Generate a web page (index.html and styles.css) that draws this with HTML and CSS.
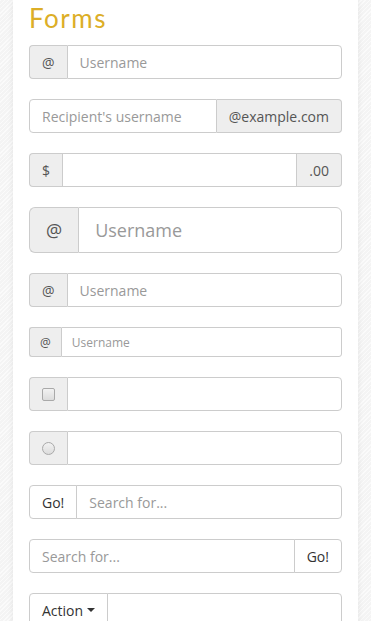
FILE: index.html
```html
<!DOCTYPE html>
<html lang="en">
<head>
  <meta charset="UTF-8">
  <meta name="viewport" content="width=device-width, initial-scale=1.0">
  <title>Forms</title>
  <link rel="stylesheet" href="styles.css">
</head>
<body>
  <div class="card">
    <h2>Forms</h2>

    <div class="input-group">
      <span class="addon">@</span>
      <input type="text" class="field" placeholder="Username">
    </div>

    <div class="input-group">
      <input type="text" class="field" placeholder="Recipient's username">
      <span class="addon">@example.com</span>
    </div>

    <div class="input-group">
      <span class="addon">$</span>
      <input type="text" class="field">
      <span class="addon">.00</span>
    </div>

    <div class="input-group lg">
      <span class="addon">@</span>
      <input type="text" class="field" placeholder="Username">
    </div>

    <div class="input-group">
      <span class="addon">@</span>
      <input type="text" class="field" placeholder="Username">
    </div>

    <div class="input-group sm">
      <span class="addon">@</span>
      <input type="text" class="field" placeholder="Username">
    </div>

    <div class="input-group">
      <span class="addon"><input type="checkbox" class="check"></span>
      <input type="text" class="field">
    </div>

    <div class="input-group">
      <span class="addon"><input type="radio" class="check round"></span>
      <input type="text" class="field">
    </div>

    <div class="input-group">
      <button class="btn" type="button">Go!</button>
      <input type="text" class="field" placeholder="Search for...">
    </div>

    <div class="input-group">
      <input type="text" class="field" placeholder="Search for...">
      <button class="btn" type="button">Go!</button>
    </div>

    <div class="input-group">
      <button class="btn" type="button">Action <span class="caret"></span></button>
      <input type="text" class="field">
    </div>
  </div>
</body>
</html>
```

FILE: styles.css
```css
html {
  overflow: hidden;
}
body {
  margin: 0;
  padding: 0 13px;
  font-family: "Open Sans", sans-serif;
  font-size: 14px;
  color: #555;
  background-color: #f4f4f4;
  background-image: repeating-linear-gradient(135deg, rgba(255,255,255,0.6) 0 1px, transparent 1px 3px);
}
.card {
  background: #fff;
  padding: 2px 16px 40px;
  box-shadow: 0 0 6px rgba(0, 0, 0, 0.08);
  min-height: 700px;
}
h2 {
  margin: 0 0 11px;
  height: 32px;
  line-height: 32px;
  font-family: Lato, sans-serif;
  font-weight: 400;
  font-size: 26px;
  letter-spacing: 1.5px;
  color: #dcae27;
}
.input-group {
  display: flex;
  height: 34px;
  margin-bottom: 20px;
}
.field {
  flex: 1;
  min-width: 0;
  margin: 0;
  padding: 6px 12px;
  border: 1px solid #ccc;
  border-radius: 4px;
  font-family: inherit;
  font-size: 14px;
  color: #555;
  box-sizing: border-box;
  height: 100%;
  outline: none;
}
.field::placeholder {
  color: #999;
}
.addon,
.btn {
  display: flex;
  align-items: center;
  justify-content: center;
  padding: 0 12px;
  border: 1px solid #ccc;
  border-radius: 4px;
  font-family: inherit;
  font-size: 14px;
  white-space: nowrap;
  box-sizing: border-box;
}
.addon {
  background: #eee;
  color: #555;
}
.btn {
  background: #fff;
  color: #333;
  margin: 0;
  height: 100%;
  cursor: pointer;
}
.input-group > :first-child {
  border-top-right-radius: 0;
  border-bottom-right-radius: 0;
}
.input-group > :last-child {
  border-top-left-radius: 0;
  border-bottom-left-radius: 0;
}
.input-group > :not(:first-child):not(:last-child) {
  border-radius: 0;
}
.input-group > .addon:first-child {
  border-right: 0;
}
.input-group > .addon:last-child {
  border-left: 0;
}
.input-group > .btn:first-child {
  margin-right: -1px;
}
.input-group > .btn:last-child {
  margin-left: -1px;
}
.check {
  -webkit-appearance: none;
  appearance: none;
  width: 13px;
  height: 13px;
  margin: 0;
  border: 1px solid #a9a9a9;
  border-radius: 2px;
  background: linear-gradient(#f2f2f2, #dcdcdc);
  box-sizing: border-box;
}
.check.round {
  border-radius: 50%;
}
.input-group.lg {
  height: 46px;
}
.lg .addon,
.lg .field {
  font-size: 18px;
  padding: 0 16px;
}
.lg .field {
  padding: 10px 16px;
}
.lg > :first-child {
  border-top-left-radius: 6px;
  border-bottom-left-radius: 6px;
}
.lg > :last-child {
  border-top-right-radius: 6px;
  border-bottom-right-radius: 6px;
}
.input-group.sm {
  height: 30px;
}
.sm .addon,
.sm .field {
  font-size: 12px;
  padding: 0 10px;
}
.sm > :first-child {
  border-top-left-radius: 3px;
  border-bottom-left-radius: 3px;
}
.sm > :last-child {
  border-top-right-radius: 3px;
  border-bottom-right-radius: 3px;
}
.caret {
  display: inline-block;
  width: 0;
  height: 0;
  margin-left: 4px;
  border-top: 4px solid #333;
  border-left: 4px solid transparent;
  border-right: 4px solid transparent;
}
```
